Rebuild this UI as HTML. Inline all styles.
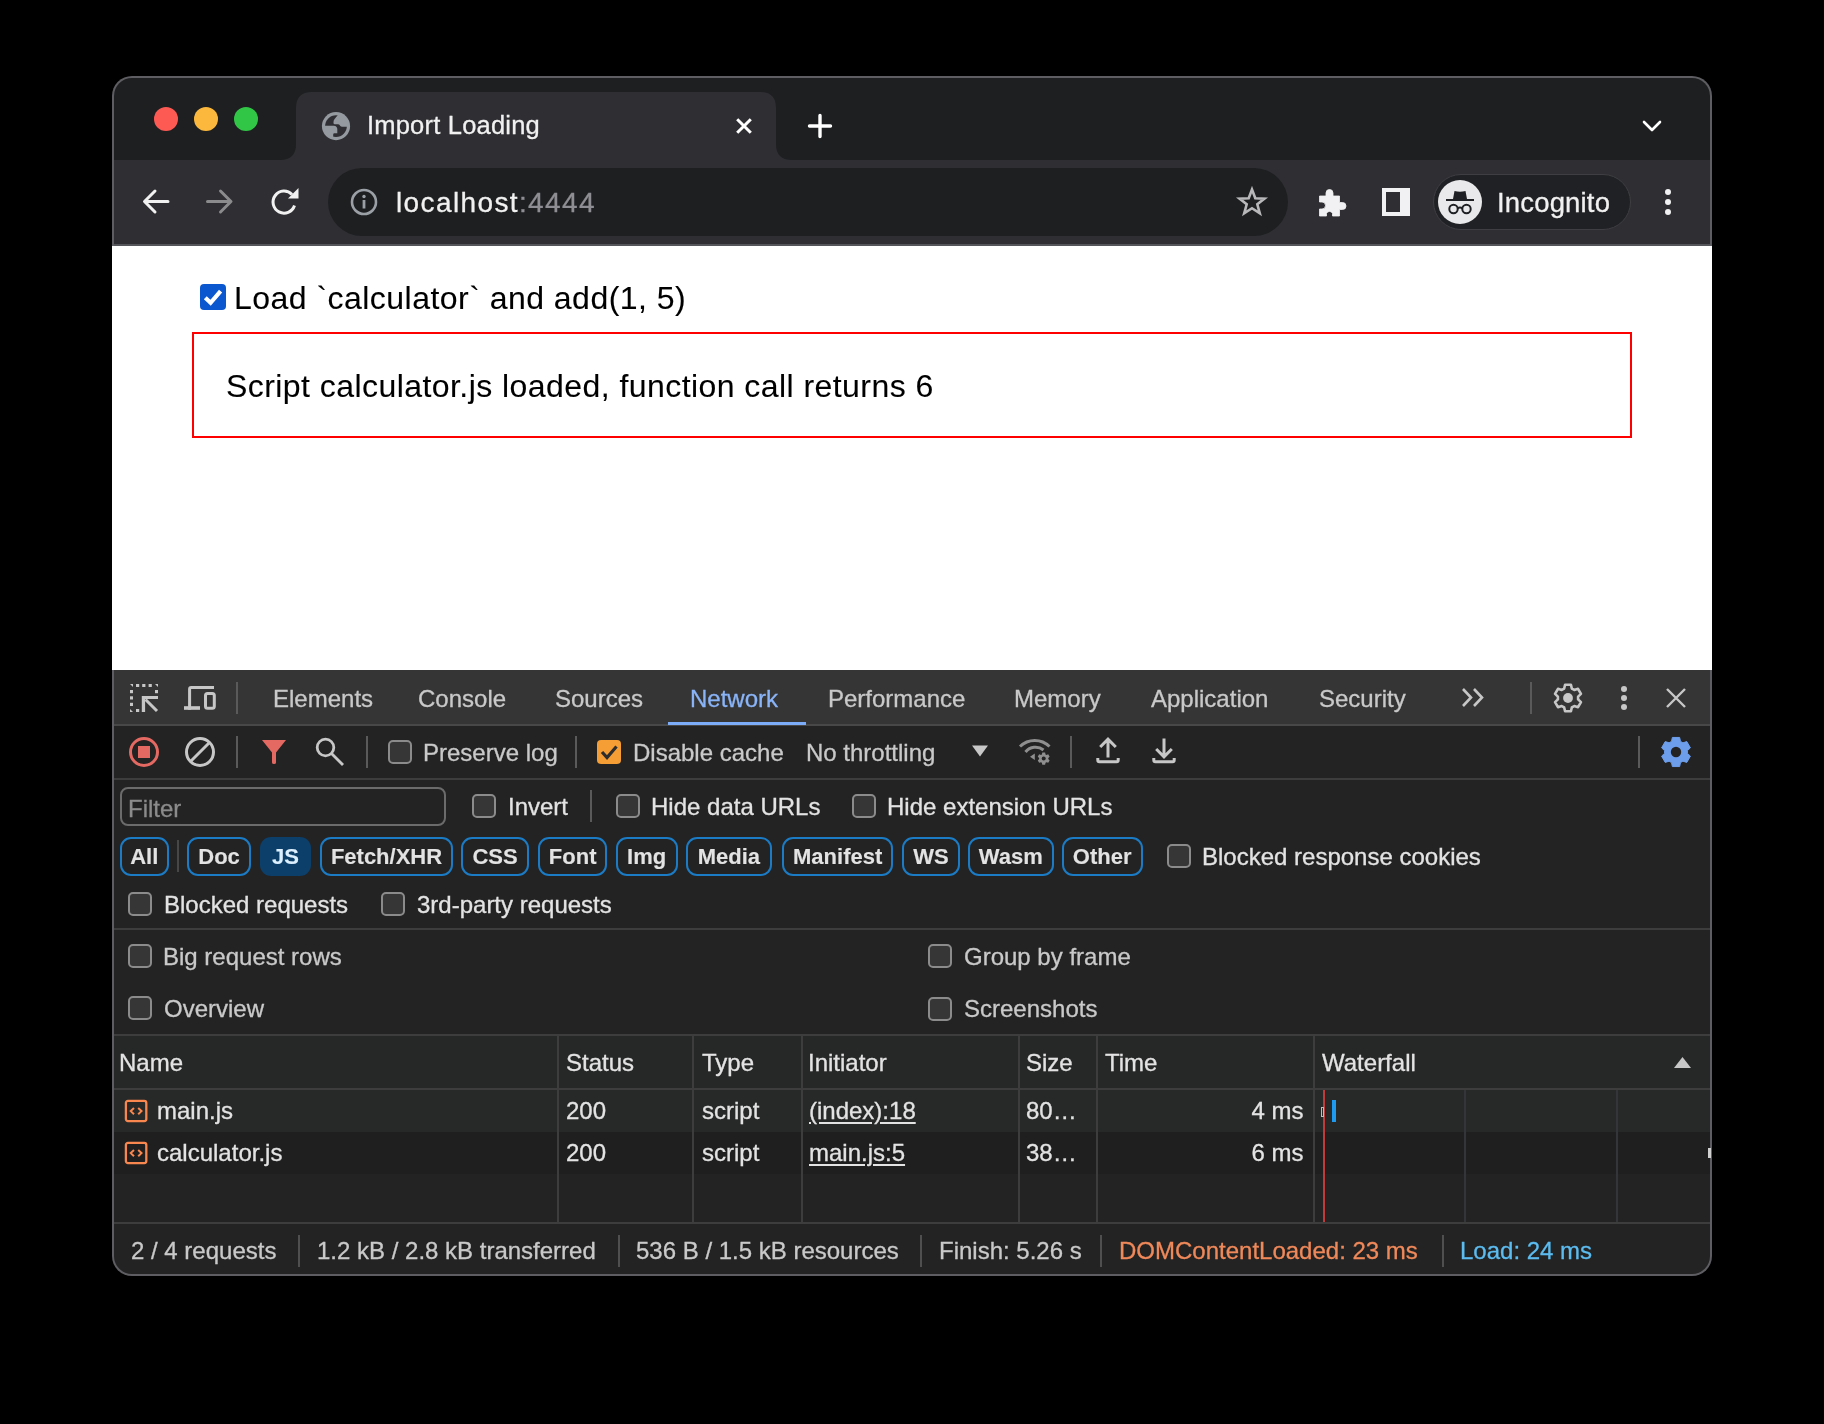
<!DOCTYPE html>
<html><head><meta charset="utf-8"><style>
html,body{margin:0;padding:0;background:#000;width:1824px;height:1424px;overflow:hidden;}
body{font-family:"Liberation Sans",sans-serif;}
#win{position:absolute;left:112px;top:76px;width:1600px;height:1200px;border-radius:20px;overflow:hidden;background:#5e5e62;}
#c{position:absolute;left:-112px;top:-76px;width:1824px;height:1424px;}
.t{position:absolute;white-space:pre;-webkit-text-stroke:0.3px currentColor;will-change:transform;}
.r{position:absolute;}
.cb{position:absolute;border:2px solid #8b8b8b;background:#363636;border-radius:5px;}
svg{position:absolute;overflow:visible;}
</style></head><body>
<div id="win"><div id="c">

<div class="r" style="left:114px;top:78px;width:1596px;height:82px;background:#1e1f21;border-radius:18px 18px 0 0;"></div>
<div class="r" style="left:114px;top:160px;width:1596px;height:84px;background:#2f2f33;"></div>
<div class="r" style="left:114px;top:244px;width:1596px;height:2px;background:#54555a;"></div>
<svg style="left:280px;top:92px" width="512" height="68" viewBox="0 0 512 68"><path d="M0 68 Q16 68 16 52 L16 16 Q16 0 32 0 L480 0 Q496 0 496 16 L496 52 Q496 68 512 68 Z" fill="#2f2f33"/></svg>
<div class="r" style="left:154px;top:107px;width:24px;height:24px;border-radius:50%;background:#fd5a54"></div>
<div class="r" style="left:194px;top:107px;width:24px;height:24px;border-radius:50%;background:#fcb83c"></div>
<div class="r" style="left:234px;top:107px;width:24px;height:24px;border-radius:50%;background:#31c646"></div>
<svg style="left:318px;top:108px" width="36" height="36" viewBox="0 0 36 36"><circle cx="18" cy="18.1" r="14.1" fill="#959aa1"/><circle cx="18" cy="18.1" r="10.9" fill="#2f2f33"/><path d="M20.95 5.8 L16.8 10.8 Q15.5 12.3 15.5 14 L15.5 15 Q15.5 16.3 16.8 16.3 L20 16.3 Q21.3 16.3 21.8 17.3 L22.1 17.8 Q22.8 18.7 24.3 18.7 L30.6 18.7 A12.65 12.65 0 0 0 20.95 5.8 Z" fill="#959aa1"/><path d="M5.4 17.7 L16 17.7 Q18.3 17.7 19 19.8 L19.3 21 L19.3 25.2 L16.5 25.2 Q15.2 25.2 15.2 26.5 L15.2 30.7 A12.8 12.8 0 0 1 5.4 17.7 Z" fill="#959aa1"/></svg>
<div class="t" style="left:366.95px;top:112.63px;font-size:25.5px;line-height:25.5px;color:#f1f1f1;letter-spacing:0.2px;">Import Loading</div>
<svg style="left:736px;top:118px" width="16" height="16" viewBox="0 0 16 16"><path d="M1.2 1.2 L14.8 14.8 M14.8 1.2 L1.2 14.8" stroke="#ffffff" stroke-width="3"/></svg>
<svg style="left:808px;top:114px" width="24" height="24" viewBox="0 0 24 24"><path d="M12 1.5 V22.5 M1.5 12 H22.5" stroke="#ffffff" stroke-width="3.4" stroke-linecap="round"/></svg>
<svg style="left:1642px;top:120px" width="20" height="12" viewBox="0 0 20 12"><path d="M2 2 L10 10 L18 2" stroke="#ffffff" stroke-width="2.6" fill="none" stroke-linecap="round" stroke-linejoin="round"/></svg>
<svg style="left:142px;top:188px" width="28" height="28" viewBox="0 0 28 28"><path d="M26 13.5 H3 M13 3 L2.5 13.5 L13 24" stroke="#f1f1f1" stroke-width="3" fill="none" stroke-linecap="round" stroke-linejoin="round"/></svg>
<svg style="left:206px;top:188px" width="28" height="28" viewBox="0 0 28 28"><path d="M1.5 13.5 H24.5 M14.5 3 L25 13.5 L14.5 24" stroke="#8b8b8e" stroke-width="3" fill="none" stroke-linecap="round" stroke-linejoin="round"/></svg>
<svg style="left:270px;top:188px" width="30" height="28" viewBox="0 0 30 28"><path d="M24.5 17.5 A11 11 0 1 1 22 6.5" stroke="#f1f1f1" stroke-width="3" fill="none"/><path d="M28.5 0 V10.5 H18 Z" fill="#f1f1f1"/></svg>
<div class="r" style="left:328px;top:168px;width:960px;height:68px;border-radius:34px;background:#1e1f21"></div>
<svg style="left:350px;top:188px" width="28" height="28" viewBox="0 0 28 28"><circle cx="14" cy="14" r="12" stroke="#9aa0a6" stroke-width="2.6" fill="none"/><rect x="12.6" y="12" width="2.8" height="8.5" fill="#9aa0a6"/><circle cx="14" cy="8.5" r="1.7" fill="#9aa0a6"/></svg>
<div class="t" style="left:395.71px;top:188.50px;font-size:28px;line-height:28px;color:#f1f1f1;letter-spacing:1.38px;">localhost<span style="color:#8e8e93">:4444</span></div>
<svg style="left:1237px;top:187px" width="30" height="29" viewBox="0 0 30 29"><path d="M15 2.5 L18.3 11.2 L27.5 11.6 L20.3 17.3 L22.8 26.3 L15 21.2 L7.2 26.3 L9.7 17.3 L2.5 11.6 L11.7 11.2 Z" stroke="#b8b8ba" stroke-width="2.6" fill="none" stroke-linejoin="miter"/></svg>
<svg style="left:1318px;top:187px" width="30" height="30" viewBox="0 0 30 30"><path d="M1.5 9 H8 V6 A3.5 3.5 0 0 1 15 6 V9 H21.5 V15.5 H24.5 A3.5 3.5 0 0 1 24.5 22.5 H21.5 V29 H14.5 V26.5 A3.2 3.2 0 0 0 8.5 26.5 V29 H1.5 V22 H4 A3.5 3.5 0 0 0 4 15 H1.5 Z" fill="#f1f1f3" stroke="#f1f1f3" stroke-width="0.8" stroke-linejoin="round"/></svg>
<div class="r" style="left:1382px;top:188px;width:28px;height:28px;background:#f1f1f3"></div>
<div class="r" style="left:1386px;top:192px;width:14px;height:20px;background:#2f2f33"></div>
<div class="r" style="left:1433px;top:174px;width:198px;height:56px;border-radius:28px;background:#202124;box-sizing:border-box;border:1.5px solid #3f3f43"></div>
<div class="r" style="left:1438px;top:180px;width:44px;height:44px;border-radius:50%;background:#e9e9eb"></div>
<svg style="left:1438px;top:180px" width="44" height="44" viewBox="0 0 44 44"><path d="M15 19 L16.5 11 Q22 12.5 27.5 11 L29 19 Z" fill="#202124"/><rect x="8" y="19" width="28" height="2" fill="#202124"/><circle cx="15.5" cy="29" r="4.2" stroke="#202124" stroke-width="2" fill="none"/><circle cx="28.5" cy="29" r="4.2" stroke="#202124" stroke-width="2" fill="none"/><path d="M19.5 28.5 Q22 26.5 24.5 28.5" stroke="#202124" stroke-width="2" fill="none"/></svg>
<div class="t" style="left:1497.16px;top:188.93px;font-size:27.5px;line-height:27.5px;color:#f1f1f1;letter-spacing:0.17px;">Incognito</div>
<div class="r" style="left:1664.7px;top:188.7px;width:6.6px;height:6.6px;border-radius:50%;background:#f1f1f3"></div>
<div class="r" style="left:1664.7px;top:198.7px;width:6.6px;height:6.6px;border-radius:50%;background:#f1f1f3"></div>
<div class="r" style="left:1664.7px;top:208.7px;width:6.6px;height:6.6px;border-radius:50%;background:#f1f1f3"></div>
<div class="r" style="left:112px;top:246px;width:1600px;height:424px;background:#ffffff;"></div>
<div class="r" style="left:200px;top:284px;width:26px;height:26px;border-radius:4px;background:#0b57d0"></div>
<svg style="left:200px;top:284px" width="26" height="26" viewBox="0 0 26 26"><path d="M5.3 13.8 L10.6 18.8 L20.6 7.2" stroke="#fff" stroke-width="4.2" fill="none" stroke-linecap="butt" stroke-linejoin="miter"/></svg>
<div class="t" style="left:233.68px;top:281.80px;font-size:32px;line-height:32px;color:#000;letter-spacing:0.47px;-webkit-text-stroke:0.1px #000;">Load `calculator` and add(1, 5)</div>
<div class="r" style="left:192px;top:332px;width:1436px;height:102px;border:2px solid #ff0000"></div>
<div class="t" style="left:225.85px;top:370.10px;font-size:32px;line-height:32px;color:#000;letter-spacing:0.44px;-webkit-text-stroke:0.1px #000;">Script calculator.js loaded, function call returns 6</div>
<div class="r" style="left:114px;top:670px;width:1596px;height:54px;background:#353535;"></div>
<div class="r" style="left:114px;top:724px;width:1596px;height:2px;background:#484848;"></div>
<div class="r" style="left:114px;top:726px;width:1596px;height:52px;background:#232323;"></div>
<div class="r" style="left:114px;top:778px;width:1596px;height:2px;background:#3d3d3d;"></div>
<div class="r" style="left:114px;top:780px;width:1596px;height:148px;background:#232323;"></div>
<div class="r" style="left:114px;top:928px;width:1596px;height:2px;background:#3d3d3d;"></div>
<div class="r" style="left:114px;top:930px;width:1596px;height:104px;background:#232323;"></div>
<div class="r" style="left:114px;top:1034px;width:1596px;height:2px;background:#3d3d3d;"></div>
<div class="r" style="left:114px;top:1036px;width:1596px;height:52px;background:#262827;"></div>
<div class="r" style="left:114px;top:1088px;width:1596px;height:2px;background:#3d3d3d;"></div>
<div class="r" style="left:114px;top:1090px;width:1596px;height:42px;background:#272928;"></div>
<div class="r" style="left:114px;top:1132px;width:1596px;height:42px;background:#1f1f1f;"></div>
<div class="r" style="left:114px;top:1174px;width:1596px;height:48px;background:#232323;"></div>
<div class="r" style="left:114px;top:1222px;width:1596px;height:2px;background:#3d3d3d;"></div>
<div class="r" style="left:114px;top:1224px;width:1596px;height:50px;background:#232323;border-radius:0 0 18px 18px;"></div>
<svg style="left:124px;top:678px" width="100" height="40" viewBox="0 0 100 40"><rect x="12" y="6" width="3.2" height="3" fill="#c7c7c7"/><rect x="18.2" y="6" width="3.2" height="3" fill="#c7c7c7"/><rect x="24.6" y="6" width="3.2" height="3" fill="#c7c7c7"/><rect x="6" y="12" width="3" height="3.2" fill="#c7c7c7"/><rect x="6" y="18.3" width="3" height="3.2" fill="#c7c7c7"/><rect x="6" y="24.8" width="3" height="3.2" fill="#c7c7c7"/><path d="M6 6 H9 V9 Z" fill="#c7c7c7"/><path d="M31 6 H34 V9 Z" fill="#c7c7c7"/><path d="M6 31 V34 H9 Z" fill="#c7c7c7"/><rect x="31" y="12" width="3" height="3.2" fill="#c7c7c7"/><rect x="12" y="31" width="3.2" height="3" fill="#c7c7c7"/><path d="M17.8 34 V18.1 H34 V21.1 H21.1 V34 Z" fill="#c7c7c7"/><path d="M21.5 21.5 L33 33" stroke="#c7c7c7" stroke-width="3"/><path d="M65.6 31.8 V11 Q65.6 9.4 67.2 9.4 H90" stroke="#c7c7c7" stroke-width="3" fill="none"/><rect x="60" y="28.2" width="16" height="3.6" fill="#c7c7c7"/><rect x="81.5" y="15.5" width="8.8" height="14.8" rx="2" stroke="#c7c7c7" stroke-width="3" fill="none"/></svg>
<div class="r" style="left:236px;top:682px;width:2px;height:32px;background:#5a5a5a;"></div>
<div class="t" style="left:272.83px;top:686.60px;font-size:24px;line-height:24px;color:#c9c9c9;">Elements</div>
<div class="t" style="left:418.38px;top:686.60px;font-size:24px;line-height:24px;color:#c9c9c9;">Console</div>
<div class="t" style="left:554.51px;top:686.60px;font-size:24px;line-height:24px;color:#c9c9c9;">Sources</div>
<div class="t" style="left:690.33px;top:686.60px;font-size:24px;line-height:24px;color:#8ab4f8;">Network</div>
<div class="t" style="left:828.33px;top:686.60px;font-size:24px;line-height:24px;color:#c9c9c9;">Performance</div>
<div class="t" style="left:1014.33px;top:686.60px;font-size:24px;line-height:24px;color:#c9c9c9;">Memory</div>
<div class="t" style="left:1151.25px;top:686.60px;font-size:24px;line-height:24px;color:#c9c9c9;">Application</div>
<div class="t" style="left:1318.51px;top:686.60px;font-size:24px;line-height:24px;color:#c9c9c9;">Security</div>
<div class="r" style="left:668px;top:722px;width:138px;height:3px;background:#7cacf8;"></div>
<svg style="left:1460px;top:686px" width="28" height="24" viewBox="0 0 28 24"><path d="M3 3 L11 11.5 L3 20 M14 3 L22 11.5 L14 20" stroke="#c7c7c7" stroke-width="2.6" fill="none"/></svg>
<div class="r" style="left:1530px;top:682px;width:2px;height:32px;background:#5a5a5a;"></div>
<svg style="left:1548px;top:678px" width="40" height="40" viewBox="0 0 40 40"><path d="M16.18 10.54 L17.06 6.72 L22.94 6.72 L23.82 10.54 L26.28 11.96 L30.03 10.81 L32.97 15.91 L30.10 18.58 L30.10 21.42 L32.97 24.09 L30.03 29.19 L26.28 28.04 L23.82 29.46 L22.94 33.28 L17.06 33.28 L16.18 29.46 L13.72 28.04 L9.97 29.19 L7.03 24.09 L9.90 21.42 L9.90 18.58 L7.03 15.91 L9.97 10.81 L13.72 11.96 Z" stroke="#c7c7c7" stroke-width="2.6" fill="none" stroke-linejoin="round"/><circle cx="20" cy="20" r="4.9" fill="#c7c7c7"/></svg>
<div class="r" style="left:1620.7px;top:685.7px;width:6.6px;height:6.6px;border-radius:50%;background:#c7c7c7"></div>
<div class="r" style="left:1620.7px;top:694.7px;width:6.6px;height:6.6px;border-radius:50%;background:#c7c7c7"></div>
<div class="r" style="left:1620.7px;top:703.9000000000001px;width:6.6px;height:6.6px;border-radius:50%;background:#c7c7c7"></div>
<svg style="left:1666px;top:688px" width="20" height="20" viewBox="0 0 20 20"><path d="M1 1 L19 19 M19 1 L1 19" stroke="#c7c7c7" stroke-width="2.4"/></svg>
<svg style="left:128px;top:736px" width="32" height="32" viewBox="0 0 32 32"><circle cx="16" cy="16" r="13.5" stroke="#e46962" stroke-width="3" fill="none"/><rect x="10" y="10" width="12" height="12" fill="#e46962"/></svg>
<svg style="left:184px;top:736px" width="32" height="32" viewBox="0 0 32 32"><circle cx="16" cy="16" r="13.5" stroke="#c7c7c7" stroke-width="3" fill="none"/><path d="M25.5 6.5 L6.5 25.5" stroke="#c7c7c7" stroke-width="3"/></svg>
<div class="r" style="left:236px;top:736px;width:2px;height:32px;background:#5a5a5a;"></div>
<svg style="left:262px;top:740px" width="24" height="24" viewBox="0 0 24 24"><path d="M0 0 H24 L14 12.5 V22.5 Q14 24 12 24 Q10 24 10 22.5 V12.5 Z" fill="#e46962"/></svg>
<svg style="left:314px;top:736px" width="32" height="32" viewBox="0 0 32 32"><circle cx="11.5" cy="11.5" r="8.3" stroke="#c7c7c7" stroke-width="2.8" fill="none"/><path d="M17.5 17.5 L29 29" stroke="#c7c7c7" stroke-width="2.8"/></svg>
<div class="r" style="left:366px;top:736px;width:2px;height:32px;background:#5a5a5a;"></div>
<div class="cb" style="left:388px;top:740px;width:20px;height:20px;"></div>
<div class="t" style="left:423.33px;top:740.60px;font-size:24px;line-height:24px;color:#c9c9c9;">Preserve log</div>
<div class="r" style="left:575px;top:736px;width:2px;height:32px;background:#5a5a5a;"></div>
<div class="r" style="left:597px;top:740px;width:24px;height:24px;border-radius:4px;background:#f59e36"></div>
<svg style="left:597px;top:740px" width="24" height="24" viewBox="0 0 24 24"><path d="M5 12 L10 17.5 L19.5 6.5" stroke="#2d2d2d" stroke-width="3.2" fill="none"/></svg>
<div class="t" style="left:632.73px;top:740.60px;font-size:24px;line-height:24px;color:#c9c9c9;">Disable cache</div>
<div class="t" style="left:805.73px;top:740.60px;font-size:24px;line-height:24px;color:#c9c9c9;">No throttling</div>
<svg style="left:972px;top:745px" width="16" height="12" viewBox="0 0 16 12"><path d="M0 0.5 H16 L8 11.5 Z" fill="#c7c7c7"/></svg>
<svg style="left:1012px;top:732px" width="44" height="40" viewBox="0 0 44 40"><path d="M8 14.5 A21 21 0 0 1 37.5 14.5" stroke="#8f8f8f" stroke-width="3" fill="none"/><path d="M13.5 20 A13 13 0 0 1 31.5 18" stroke="#8f8f8f" stroke-width="3" fill="none"/><path d="M18 24.7 L22.8 21.4 L22.8 28 Z" fill="#8f8f8f"/><path d="M29.83 22.40 L30.31 20.56 L33.09 20.56 L33.57 22.40 L34.40 22.88 L36.23 22.37 L37.63 24.79 L36.27 26.12 L36.27 27.08 L37.63 28.41 L36.23 30.83 L34.40 30.32 L33.57 30.80 L33.09 32.64 L30.31 32.64 L29.83 30.80 L29.00 30.32 L27.17 30.83 L25.77 28.41 L27.13 27.08 L27.13 26.12 L25.77 24.79 L27.17 22.37 L29.00 22.88 Z" fill="#8f8f8f"/><circle cx="31.7" cy="26.6" r="2" fill="#232323"/></svg>
<div class="r" style="left:1070px;top:736px;width:2px;height:32px;background:#5a5a5a;"></div>
<svg style="left:1094px;top:736px" width="28" height="30" viewBox="0 0 28 30"><path d="M14 3.5 V21.6 M6.2 11 L14 3.2 L21.8 11" stroke="#c7c7c7" stroke-width="3" fill="none"/><path d="M3.8 22 V24 Q3.8 25.7 5.5 25.7 H22.5 Q24.2 25.7 24.2 24 V22" stroke="#c7c7c7" stroke-width="3" fill="none"/></svg>
<svg style="left:1150px;top:736px" width="28" height="30" viewBox="0 0 28 30"><path d="M14 2.5 V21 M6.2 13 L14 20.8 L21.8 13" stroke="#c7c7c7" stroke-width="3" fill="none"/><path d="M3.8 22 V24 Q3.8 25.7 5.5 25.7 H22.5 Q24.2 25.7 24.2 24 V22" stroke="#c7c7c7" stroke-width="3" fill="none"/></svg>
<div class="r" style="left:1638px;top:736px;width:2px;height:32px;background:#5a5a5a;"></div>
<svg style="left:1656px;top:732px" width="40" height="40" viewBox="0 0 40 40"><path d="M15.51 9.41 L16.37 5.45 L23.63 5.45 L24.49 9.41 L26.92 10.82 L30.79 9.58 L34.42 15.87 L31.41 18.60 L31.41 21.40 L34.42 24.13 L30.79 30.42 L26.92 29.18 L24.49 30.59 L23.63 34.55 L16.37 34.55 L15.51 30.59 L13.08 29.18 L9.21 30.42 L5.58 24.13 L8.59 21.40 L8.59 18.60 L5.58 15.87 L9.21 9.58 L13.08 10.82 Z" fill="#6d9eeb" stroke="#6d9eeb" stroke-width="1" stroke-linejoin="round"/><circle cx="20" cy="20" r="5.2" fill="#232323"/></svg>
<div class="r" style="left:120px;top:787px;width:322px;height:35px;border:2px solid #6b6b6b;border-radius:8px"></div>
<div class="t" style="left:127.63px;top:796.60px;font-size:24px;line-height:24px;color:#8b8b8b;">Filter</div>
<div class="cb" style="left:472px;top:794px;width:20px;height:20px;"></div>
<div class="t" style="left:507.79px;top:794.90px;font-size:24px;line-height:24px;color:#e3e3e3;">Invert</div>
<div class="r" style="left:590px;top:790px;width:2px;height:32px;background:#5a5a5a;"></div>
<div class="cb" style="left:616.4px;top:794px;width:20px;height:20px;"></div>
<div class="t" style="left:650.93px;top:794.90px;font-size:24px;line-height:24px;color:#e3e3e3;">Hide data URLs</div>
<div class="cb" style="left:852px;top:794px;width:20px;height:20px;"></div>
<div class="t" style="left:886.73px;top:794.90px;font-size:24px;line-height:24px;color:#e3e3e3;">Hide extension URLs</div>
<div class="r" style="left:120.4px;top:837px;width:44.4px;height:35px;border-radius:11px;border:2px solid #1b7bc4;"></div>
<div class="t" style="left:120.4px;top:845.80px;width:48.4px;text-align:center;font-size:22px;line-height:22px;font-weight:700;color:#e3e3e3;-webkit-text-stroke:0.1px #e3e3e3">All</div>
<div class="r" style="left:187.3px;top:837px;width:60.1px;height:35px;border-radius:11px;border:2px solid #1b7bc4;"></div>
<div class="t" style="left:187.3px;top:845.80px;width:64.1px;text-align:center;font-size:22px;line-height:22px;font-weight:700;color:#e3e3e3;-webkit-text-stroke:0.1px #e3e3e3">Doc</div>
<div class="r" style="left:260.2px;top:837px;width:50.8px;height:39px;border-radius:11px;background:#0c3f69;"></div>
<div class="t" style="left:260.2px;top:845.80px;width:50.8px;text-align:center;font-size:22px;line-height:22px;font-weight:700;color:#dcefff;-webkit-text-stroke:0.1px #dcefff">JS</div>
<div class="r" style="left:319.7px;top:837px;width:129.0px;height:35px;border-radius:11px;border:2px solid #1b7bc4;"></div>
<div class="t" style="left:319.7px;top:845.80px;width:133.0px;text-align:center;font-size:22px;line-height:22px;font-weight:700;color:#e3e3e3;-webkit-text-stroke:0.1px #e3e3e3">Fetch/XHR</div>
<div class="r" style="left:461.4px;top:837px;width:64.0px;height:35px;border-radius:11px;border:2px solid #1b7bc4;"></div>
<div class="t" style="left:461.4px;top:845.80px;width:68.0px;text-align:center;font-size:22px;line-height:22px;font-weight:700;color:#e3e3e3;-webkit-text-stroke:0.1px #e3e3e3">CSS</div>
<div class="r" style="left:538.2px;top:837px;width:65.3px;height:35px;border-radius:11px;border:2px solid #1b7bc4;"></div>
<div class="t" style="left:538.2px;top:845.80px;width:69.3px;text-align:center;font-size:22px;line-height:22px;font-weight:700;color:#e3e3e3;-webkit-text-stroke:0.1px #e3e3e3">Font</div>
<div class="r" style="left:616.4px;top:837px;width:57.2px;height:35px;border-radius:11px;border:2px solid #1b7bc4;"></div>
<div class="t" style="left:616.4px;top:845.80px;width:61.2px;text-align:center;font-size:22px;line-height:22px;font-weight:700;color:#e3e3e3;-webkit-text-stroke:0.1px #e3e3e3">Img</div>
<div class="r" style="left:686.3px;top:837px;width:81.8px;height:35px;border-radius:11px;border:2px solid #1b7bc4;"></div>
<div class="t" style="left:686.3px;top:845.80px;width:85.8px;text-align:center;font-size:22px;line-height:22px;font-weight:700;color:#e3e3e3;-webkit-text-stroke:0.1px #e3e3e3">Media</div>
<div class="r" style="left:781.5px;top:837px;width:107.3px;height:35px;border-radius:11px;border:2px solid #1b7bc4;"></div>
<div class="t" style="left:781.5px;top:845.80px;width:111.3px;text-align:center;font-size:22px;line-height:22px;font-weight:700;color:#e3e3e3;-webkit-text-stroke:0.1px #e3e3e3">Manifest</div>
<div class="r" style="left:901.5px;top:837px;width:54.1px;height:35px;border-radius:11px;border:2px solid #1b7bc4;"></div>
<div class="t" style="left:901.5px;top:845.80px;width:58.1px;text-align:center;font-size:22px;line-height:22px;font-weight:700;color:#e3e3e3;-webkit-text-stroke:0.1px #e3e3e3">WS</div>
<div class="r" style="left:968.2px;top:837px;width:81.5px;height:35px;border-radius:11px;border:2px solid #1b7bc4;"></div>
<div class="t" style="left:968.2px;top:845.80px;width:85.5px;text-align:center;font-size:22px;line-height:22px;font-weight:700;color:#e3e3e3;-webkit-text-stroke:0.1px #e3e3e3">Wasm</div>
<div class="r" style="left:1062.3px;top:837px;width:76.4px;height:35px;border-radius:11px;border:2px solid #1b7bc4;"></div>
<div class="t" style="left:1062.3px;top:845.80px;width:80.4px;text-align:center;font-size:22px;line-height:22px;font-weight:700;color:#e3e3e3;-webkit-text-stroke:0.1px #e3e3e3">Other</div>
<div class="r" style="left:177px;top:840px;width:2px;height:32px;background:#474747;"></div>
<div class="cb" style="left:1167.3px;top:844.3px;width:20px;height:20px;"></div>
<div class="t" style="left:1201.83px;top:844.60px;font-size:24px;line-height:24px;color:#e3e3e3;">Blocked response cookies</div>
<div class="cb" style="left:128.4px;top:892px;width:20px;height:20px;"></div>
<div class="t" style="left:163.53px;top:892.60px;font-size:24px;line-height:24px;color:#e3e3e3;">Blocked requests</div>
<div class="cb" style="left:381.4px;top:892px;width:20px;height:20px;"></div>
<div class="t" style="left:416.99px;top:892.60px;font-size:24px;line-height:24px;color:#e3e3e3;">3rd-party requests</div>
<div class="cb" style="left:128.4px;top:944px;width:20px;height:20px;"></div>
<div class="t" style="left:162.83px;top:944.60px;font-size:24px;line-height:24px;color:#c9c9c9;">Big request rows</div>
<div class="cb" style="left:128.4px;top:996px;width:20px;height:20px;"></div>
<div class="t" style="left:163.66px;top:996.60px;font-size:24px;line-height:24px;color:#c9c9c9;">Overview</div>
<div class="cb" style="left:928.3px;top:944.4px;width:20px;height:20px;"></div>
<div class="t" style="left:963.59px;top:944.60px;font-size:24px;line-height:24px;color:#c9c9c9;">Group by frame</div>
<div class="cb" style="left:928.3px;top:996.5px;width:20px;height:20px;"></div>
<div class="t" style="left:963.71px;top:996.60px;font-size:24px;line-height:24px;color:#c9c9c9;">Screenshots</div>
<div class="r" style="left:556.5px;top:1036px;width:2px;height:186px;background:#3d3d3d;"></div>
<div class="r" style="left:692px;top:1036px;width:2px;height:186px;background:#3d3d3d;"></div>
<div class="r" style="left:800.5px;top:1036px;width:2px;height:186px;background:#3d3d3d;"></div>
<div class="r" style="left:1017.5px;top:1036px;width:2px;height:186px;background:#3d3d3d;"></div>
<div class="r" style="left:1095.5px;top:1036px;width:2px;height:186px;background:#3d3d3d;"></div>
<div class="r" style="left:1312.5px;top:1036px;width:2px;height:186px;background:#3d3d3d;"></div>
<div class="r" style="left:1464px;top:1090px;width:2px;height:132px;background:#333538;"></div>
<div class="r" style="left:1616px;top:1090px;width:2px;height:132px;background:#333538;"></div>
<div class="t" style="left:118.73px;top:1050.60px;font-size:24px;line-height:24px;color:#e3e3e3;">Name</div>
<div class="t" style="left:566.11px;top:1050.60px;font-size:24px;line-height:24px;color:#e3e3e3;">Status</div>
<div class="t" style="left:701.76px;top:1050.60px;font-size:24px;line-height:24px;color:#e3e3e3;">Type</div>
<div class="t" style="left:808.49px;top:1050.60px;font-size:24px;line-height:24px;color:#e3e3e3;">Initiator</div>
<div class="t" style="left:1026.01px;top:1050.60px;font-size:24px;line-height:24px;color:#e3e3e3;">Size</div>
<div class="t" style="left:1105.26px;top:1050.60px;font-size:24px;line-height:24px;color:#e3e3e3;">Time</div>
<div class="t" style="left:1322.19px;top:1050.60px;font-size:24px;line-height:24px;color:#e3e3e3;">Waterfall</div>
<svg style="left:1674px;top:1057px" width="17" height="11" viewBox="0 0 17 11"><path d="M8.5 0 L17 11 H0 Z" fill="#c7c7c7"/></svg>
<svg style="left:123.5px;top:1099px" width="24" height="24" viewBox="0 0 24 24"><rect x="1.9" y="1.9" width="20.4" height="20.2" rx="2" stroke="#f7864f" stroke-width="2.3" fill="none"/><path d="M10 9 L6.7 12.1 L10 15.3 M14.2 9 L17.5 12.1 L14.2 15.3" stroke="#f7864f" stroke-width="2" fill="none"/></svg>
<div class="t" style="left:156.71px;top:1099.10px;font-size:24px;line-height:24px;color:#e3e3e3;">main.js</div>
<div class="t" style="left:565.99px;top:1099.10px;font-size:24px;line-height:24px;color:#e3e3e3;">200</div>
<div class="t" style="left:701.63px;top:1099.10px;font-size:24px;line-height:24px;color:#e3e3e3;">script</div>
<div class="t" style="left:809.21px;top:1099.10px;font-size:24px;line-height:24px;color:#e3e3e3;text-decoration:underline;text-underline-offset:3px;">(index):18</div>
<div class="t" style="left:1026.06px;top:1099.10px;font-size:24px;line-height:24px;color:#e3e3e3;">80…</div>
<div class="t" style="left:1103px;top:1099.10px;width:200.5px;text-align:right;font-size:24px;line-height:24px;color:#e3e3e3">4 ms</div>
<svg style="left:123.5px;top:1141px" width="24" height="24" viewBox="0 0 24 24"><rect x="1.9" y="1.9" width="20.4" height="20.2" rx="2" stroke="#f7864f" stroke-width="2.3" fill="none"/><path d="M10 9 L6.7 12.1 L10 15.3 M14.2 9 L17.5 12.1 L14.2 15.3" stroke="#f7864f" stroke-width="2" fill="none"/></svg>
<div class="t" style="left:157.28px;top:1141.10px;font-size:24px;line-height:24px;color:#e3e3e3;">calculator.js</div>
<div class="t" style="left:565.99px;top:1141.10px;font-size:24px;line-height:24px;color:#e3e3e3;">200</div>
<div class="t" style="left:701.63px;top:1141.10px;font-size:24px;line-height:24px;color:#e3e3e3;">script</div>
<div class="t" style="left:809.11px;top:1141.10px;font-size:24px;line-height:24px;color:#e3e3e3;text-decoration:underline;text-underline-offset:3px;">main.js:5</div>
<div class="t" style="left:1026.19px;top:1141.10px;font-size:24px;line-height:24px;color:#e3e3e3;">38…</div>
<div class="t" style="left:1103px;top:1141.10px;width:200.5px;text-align:right;font-size:24px;line-height:24px;color:#e3e3e3">6 ms</div>
<div class="r" style="left:1323px;top:1090px;width:2px;height:132px;background:#c13b3b;"></div>
<div class="r" style="left:1332px;top:1100px;width:4px;height:21.5px;background:#1e9bf0;"></div>
<div class="r" style="left:1321px;top:1107px;width:1px;height:8px;border:1px solid #bdbdbd"></div>
<div class="r" style="left:1708px;top:1148px;width:3px;height:10px;background:#d0d0d0;"></div>
<div class="t" style="left:131.09px;top:1238.80px;font-size:24px;line-height:24px;color:#c9c9c9;">2 / 4 requests</div>
<div class="t" style="left:316.67px;top:1238.80px;font-size:24px;line-height:24px;color:#c9c9c9;">1.2 kB / 2.8 kB transferred</div>
<div class="t" style="left:636.34px;top:1238.80px;font-size:24px;line-height:24px;color:#c9c9c9;">536 B / 1.5 kB resources</div>
<div class="t" style="left:939.03px;top:1238.80px;font-size:24px;line-height:24px;color:#c9c9c9;">Finish: 5.26 s</div>
<div class="t" style="left:1119.33px;top:1238.80px;font-size:24px;line-height:24px;color:#f0895a;">DOMContentLoaded: 23 ms</div>
<div class="t" style="left:1459.63px;top:1238.80px;font-size:24px;line-height:24px;color:#5cbcf0;">Load: 24 ms</div>
<div class="r" style="left:297.5px;top:1235px;width:2px;height:32px;background:#4f4f4f;"></div>
<div class="r" style="left:617.5px;top:1235px;width:2px;height:32px;background:#4f4f4f;"></div>
<div class="r" style="left:920px;top:1235px;width:2px;height:32px;background:#4f4f4f;"></div>
<div class="r" style="left:1100px;top:1235px;width:2px;height:32px;background:#4f4f4f;"></div>
<div class="r" style="left:1441.5px;top:1235px;width:2px;height:32px;background:#4f4f4f;"></div>
</div></div></body></html>
